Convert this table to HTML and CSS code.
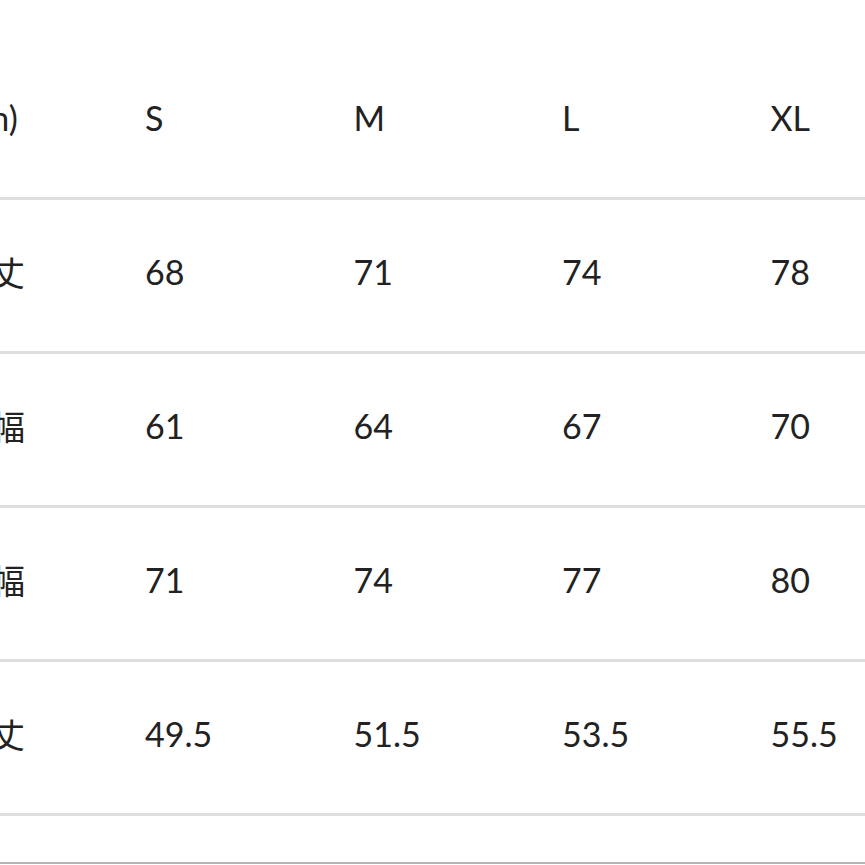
FILE: index.html
```html
<!DOCTYPE html>
<html lang="ja">
<head>
<meta charset="utf-8">
<link rel="stylesheet" href="styles.css">
</head>
<body>
<div class="page">
  <table class="size-table">
    <colgroup>
      <col class="col-label">
      <col class="col-size">
      <col class="col-size">
      <col class="col-size">
      <col class="col-size">
    </colgroup>
    <tbody>
      <tr><td class="label">(cm)</td><td>S</td><td>M</td><td>L</td><td>XL</td></tr>
      <tr><td class="label">着丈</td><td>68</td><td>71</td><td>74</td><td>78</td></tr>
      <tr><td class="label">肩幅</td><td>61</td><td>64</td><td>67</td><td>70</td></tr>
      <tr><td class="label">身幅</td><td>71</td><td>74</td><td>77</td><td>80</td></tr>
      <tr><td class="label">袖丈</td><td>49.5</td><td>51.5</td><td>53.5</td><td>55.5</td></tr>
    </tbody>
  </table>
  <div class="footer-rule"></div>
</div>
</body>
</html>
```

FILE: styles.css
```css
html, body {
  margin: 0;
  padding: 0;
  background: #ffffff;
  overflow: hidden;
}

.page {
  width: 865px;
  height: 865px;
  overflow: hidden;
  padding-top: 46px;
  box-sizing: border-box;
}

.size-table {
  margin-left: -51px;
  border-collapse: collapse;
  table-layout: fixed;
  width: 1030px;
  font-family: "Lato", "Noto Sans CJK JP", sans-serif;
  font-size: 34px;
  color: #222222;
}

.col-label { width: 196px; }
.col-size { width: 208.5px; }

.size-table td {
  height: 143px;
  padding: 0 0 8px 0;
  text-align: left;
  vertical-align: middle;
  border-bottom: 3px solid #dedede;
  white-space: nowrap;
}

.size-table td.label {
  padding-left: 8px;
}

.footer-rule {
  margin-top: 46px;
  border-top: 2px solid #b4b4b4;
}
```
